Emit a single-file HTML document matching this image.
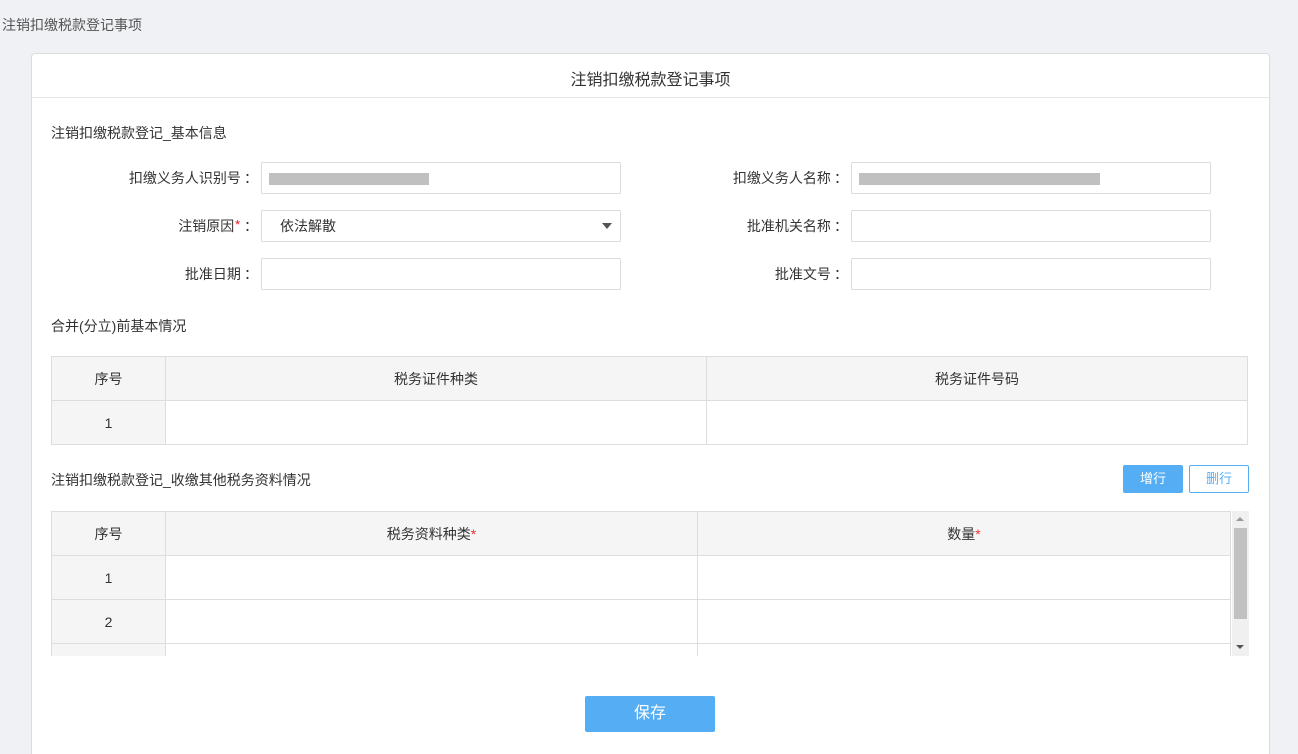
<!DOCTYPE html><html style="width:1298px;height:754px;overflow:hidden"><head><meta charset="utf-8"><style>
*{box-sizing:border-box;margin:0;padding:0}
body{width:1298px;height:754px;background:#f0f1f5;font-family:"Liberation Sans","Noto Sans CJK SC",sans-serif;font-size:14px;color:#333;position:relative;overflow:hidden}
.a{position:absolute}
.panel{left:31px;top:53px;width:1239px;height:701px;background:#fff;border:1px solid #dcdcdc;border-bottom:none;border-radius:4px 4px 0 0}
.inp{position:absolute;height:32px;border:1px solid #dcdcdc;border-radius:2px;background:#fff}
.lab{position:absolute;width:200px;text-align:right;line-height:32px;font-family:"Noto Sans CJK SC",sans-serif}
.gray{position:absolute;top:10px;height:12px;background:#c0c0c0}
table{position:absolute;border-collapse:collapse;table-layout:fixed}
td{border:1px solid #ddd;text-align:center;height:44px}
tr.h td{background:#f5f5f5}
.r{color:#e33}
</style></head><body>
<div class="a" style="left:2px;top:15px;color:#555">注销扣缴税款登记事项</div>
<div class="a panel"></div>
<div class="a" style="left:31px;top:66px;width:1239px;text-align:center;font-size:16px;color:#333">注销扣缴税款登记事项</div>
<div class="a" style="left:32px;top:97px;width:1237px;height:1px;background:#e6e6e6"></div>
<div class="a" style="left:51px;top:123px">注销扣缴税款登记_基本信息</div>

<div class="lab" style="left:58px;top:162px">扣缴义务人识别号 ：</div>
<div class="inp" style="left:261px;top:162px;width:360px"><div class="gray" style="left:7px;width:160px"></div></div>
<div class="lab" style="left:648px;top:162px">扣缴义务人名称 ：</div>
<div class="inp" style="left:851px;top:162px;width:360px"><div class="gray" style="left:7px;width:241px"></div></div>

<div class="lab" style="left:58px;top:210px">注销原因<span class="r">*</span> ：</div>
<div class="inp" style="left:261px;top:210px;width:360px;line-height:30px;padding-left:18px">依法解散<span style="position:absolute;right:8px;top:12px;border-left:5px solid transparent;border-right:5px solid transparent;border-top:6px solid #555"></span></div>
<div class="lab" style="left:648px;top:210px">批准机关名称 ：</div>
<div class="inp" style="left:851px;top:210px;width:360px"></div>

<div class="lab" style="left:58px;top:258px">批准日期 ：</div>
<div class="inp" style="left:261px;top:258px;width:360px"></div>
<div class="lab" style="left:648px;top:258px">批准文号 ：</div>
<div class="inp" style="left:851px;top:258px;width:360px"></div>

<div class="a" style="left:51px;top:316px">合并(分立)前基本情况</div>
<table style="left:51px;top:356px;width:1197px">
<colgroup><col style="width:114px"><col style="width:541px"><col></colgroup>
<tr class="h"><td>序号</td><td>税务证件种类</td><td>税务证件号码</td></tr>
<tr><td style="background:#f5f5f5">1</td><td></td><td></td></tr>
</table>

<div class="a" style="left:51px;top:470px">注销扣缴税款登记_收缴其他税务资料情况</div>
<div class="a" style="left:1123px;top:465px;width:60px;height:28px;background:#55aef3;border-radius:2px;color:#fff;text-align:center;line-height:28px;font-size:13px">增行</div>
<div class="a" style="left:1189px;top:465px;width:60px;height:28px;border:1px solid #55aef3;border-radius:2px;color:#55aef3;text-align:center;line-height:26px;font-size:13px">删行</div>

<div class="a" style="left:51px;top:511px;width:1180px;height:145px;overflow:hidden">
<table style="left:0;top:0;width:1180px">
<colgroup><col style="width:114px"><col style="width:532px"><col></colgroup>
<tr class="h"><td>序号</td><td>税务资料种类<span class="r">*</span></td><td>数量<span class="r">*</span></td></tr>
<tr><td style="background:#f5f5f5">1</td><td></td><td></td></tr>
<tr><td style="background:#f5f5f5">2</td><td></td><td></td></tr>
<tr><td style="background:#f5f5f5">3</td><td></td><td></td></tr>
</table></div>
<div class="a" style="left:1232px;top:511px;width:17px;height:145px;background:#f0f0f0">
<div class="a" style="left:4px;top:6px;border-left:4px solid transparent;border-right:4px solid transparent;border-bottom:4px solid #999"></div>
<div class="a" style="left:2px;top:17px;width:13px;height:91px;background:#c1c1c1"></div>
<div class="a" style="left:4px;top:134px;border-left:4px solid transparent;border-right:4px solid transparent;border-top:4px solid #555"></div>
</div>

<div class="a" style="left:585px;top:696px;width:130px;height:36px;background:#55aef3;border-radius:2px;color:#fff;text-align:center;line-height:36px;font-size:16px">保存</div>
</body></html>
